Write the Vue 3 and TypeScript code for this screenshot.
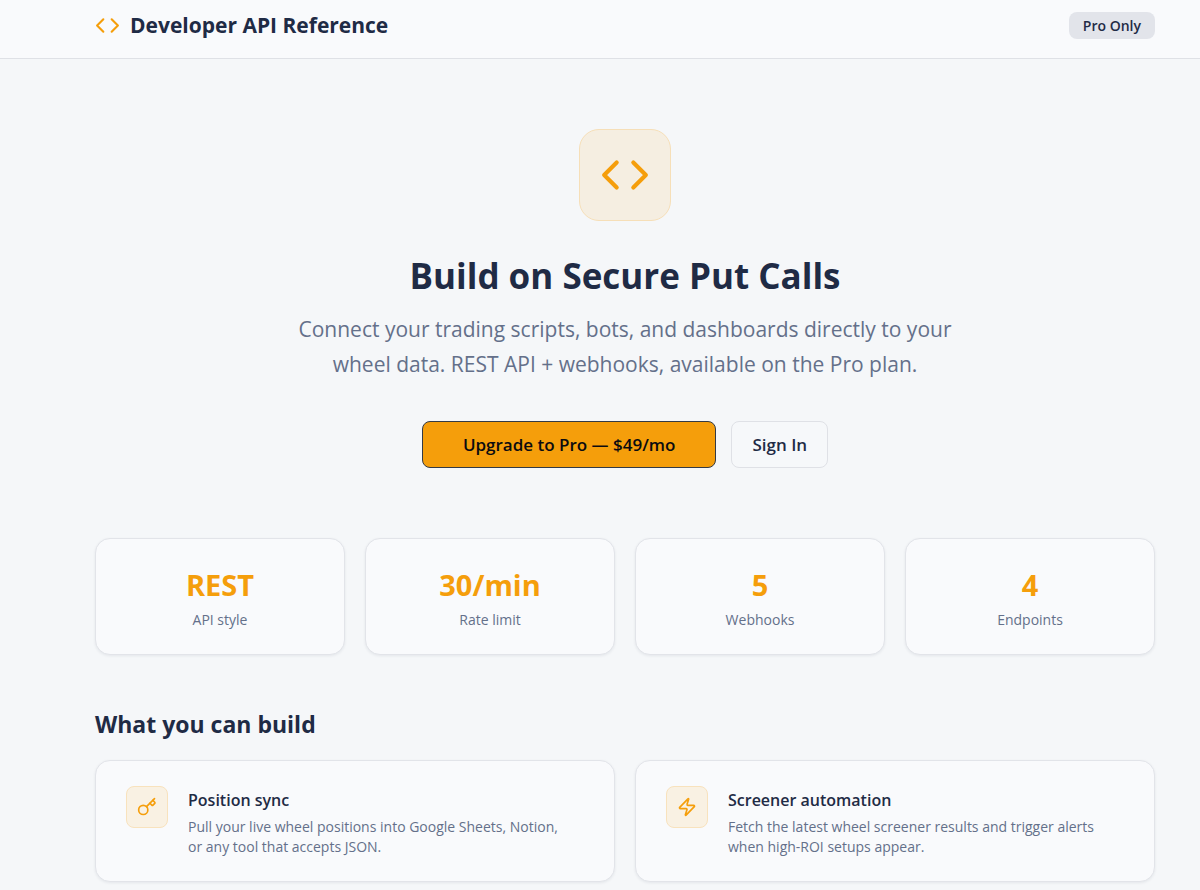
<script setup lang="ts">
interface Stat {
  value: string
  label: string
}

interface Feature {
  icon: 'key' | 'zap'
  title: string
  text: string
}

const stats: Stat[] = [
  { value: 'REST', label: 'API style' },
  { value: '30/min', label: 'Rate limit' },
  { value: '5', label: 'Webhooks' },
  { value: '4', label: 'Endpoints' },
]

const features: Feature[] = [
  {
    icon: 'key',
    title: 'Position sync',
    text: 'Pull your live wheel positions into Google Sheets, Notion, or any tool that accepts JSON.',
  },
  {
    icon: 'zap',
    title: 'Screener automation',
    text: 'Fetch the latest wheel screener results and trigger alerts when high-ROI setups appear.',
  },
]
</script>

<template>
  <div class="page">
    <header class="topbar">
      <div class="brand">
        <svg class="icon brand-icon" viewBox="0 0 24 24" aria-hidden="true">
          <path d="m16 18 6-6-6-6" />
          <path d="m8 6-6 6 6 6" />
        </svg>
        <h1 class="brand-title">Developer API Reference</h1>
      </div>
      <span class="badge">Pro Only</span>
    </header>

    <main class="content">
      <section class="hero">
        <div class="hero-tile">
          <svg class="icon hero-icon" viewBox="0 0 24 24" aria-hidden="true">
            <path d="m16 18 6-6-6-6" />
            <path d="m8 6-6 6 6 6" />
          </svg>
        </div>
        <h2 class="hero-title">Build on Secure Put Calls</h2>
        <p class="hero-text">
          Connect your trading scripts, bots, and dashboards directly to your wheel data. REST API +
          webhooks, available on the Pro plan.
        </p>
        <div class="actions">
          <button type="button" class="btn btn-primary">Upgrade to Pro — $49/mo</button>
          <button type="button" class="btn btn-outline">Sign In</button>
        </div>
      </section>

      <section class="stats">
        <div v-for="stat in stats" :key="stat.label" class="card stat">
          <div class="stat-value">{{ stat.value }}</div>
          <div class="stat-label">{{ stat.label }}</div>
        </div>
      </section>

      <section>
        <h2 class="section-title">What you can build</h2>
        <div class="features">
          <article v-for="feature in features" :key="feature.title" class="card feature">
            <div class="feature-tile">
              <svg class="icon feature-icon" viewBox="0 0 24 24" aria-hidden="true">
                <template v-if="feature.icon === 'key'">
                  <circle cx="7.5" cy="15.5" r="5.5" />
                  <path d="m21 2-9.6 9.6" />
                  <path d="m15.5 7.5 2.3 2.3a1 1 0 0 0 1.4 0l2.1-2.1a1 1 0 0 0 0-1.4L19 4" />
                </template>
                <path
                  v-else
                  d="M4 14a1 1 0 0 1-.78-1.63l9.9-10.2a.5.5 0 0 1 .86.46l-1.92 6.02A1 1 0 0 0 13 10h7a1 1 0 0 1 .78 1.63l-9.9 10.2a.5.5 0 0 1-.86-.46l1.92-6.02A1 1 0 0 0 11 14z"
                />
              </svg>
            </div>
            <div>
              <h3 class="feature-title">{{ feature.title }}</h3>
              <p class="feature-text">{{ feature.text }}</p>
            </div>
          </article>
        </div>
      </section>
    </main>
  </div>
</template>

<style>
body {
  margin: 0;
  background: #f5f7f9;
}
</style>

<style scoped>
.page {
  color: #1f2b45;
  font-family: 'Segoe UI', 'Open Sans', 'Noto Sans', sans-serif;
  font-size: 14px;
  line-height: 20px;
}

h1,
h2,
h3,
p {
  margin: 0;
}

.icon {
  display: block;
  fill: none;
  stroke: #f59e0b;
  stroke-width: 2;
  stroke-linecap: round;
  stroke-linejoin: round;
}

.topbar {
  display: flex;
  align-items: center;
  justify-content: space-between;
  padding: 7px 45px 15px 95px;
  background: #f9fafc;
  border-bottom: 1px solid #dfe1e6;
}

.brand {
  display: flex;
  align-items: center;
  gap: 10px;
}

.brand-icon {
  width: 25px;
  height: 25px;
}

.brand-title {
  font-size: 21px;
  line-height: 36px;
  font-weight: 700;
}

.badge {
  padding: 4px 14px 3px;
  border-radius: 8px;
  background: #e2e4ea;
  font-weight: 600;
}

.content {
  padding: 70px 45px 20px 95px;
}

.hero {
  display: flex;
  flex-direction: column;
  align-items: center;
  text-align: center;
}

.hero-tile {
  padding: 20px;
  border: 1px solid #f6dfb8;
  border-radius: 20px;
  background: #f5eee1;
}

.hero-icon {
  width: 50px;
  height: 50px;
}

.hero-title {
  margin-top: 30px;
  font-size: 35px;
  line-height: 50px;
  font-weight: 700;
}

.hero-text {
  max-width: 700px;
  margin-top: 11px;
  color: #64708a;
  font-size: 21px;
  line-height: 35px;
}

.actions {
  display: flex;
  gap: 15px;
  margin-top: 39px;
}

.btn {
  padding: 11px 20px 10px;
  border: 1px solid #dfe1e6;
  border-radius: 8px;
  font: inherit;
  font-size: 17px;
  line-height: 24px;
  font-weight: 600;
  cursor: pointer;
}

.btn-primary {
  padding-inline: 40px;
  border-color: #333a45;
  background: #f59e0b;
  color: #0b0b10;
}

.btn-outline {
  background: #f6f8fa;
  color: #1f2b45;
}

.card {
  border: 1px solid #e2e4e9;
  border-radius: 15px;
  background: #f9fafc;
  box-shadow: 0 1px 3px rgb(31 43 69 / 8%);
}

.stats {
  display: grid;
  grid-template-columns: repeat(4, 1fr);
  gap: 20px;
  margin-top: 70px;
}

.stat {
  padding: 26px 25px 24px;
  text-align: center;
}

.stat-value {
  color: #f59e0b;
  font-size: 29px;
  line-height: 40px;
  font-weight: 700;
}

.stat-label {
  margin-top: 5px;
  color: #64708a;
}

.section-title {
  margin-top: 51px;
  font-size: 23px;
  line-height: 36px;
  font-weight: 700;
}

.features {
  display: grid;
  grid-template-columns: repeat(2, 1fr);
  gap: 20px;
  margin-top: 18px;
}

.feature {
  display: flex;
  gap: 20px;
  padding: 25px 30px 24px;
}

.feature-tile {
  flex: none;
  align-self: flex-start;
  padding: 10px;
  border: 1px solid #f8e2bd;
  border-radius: 8px;
  background: #f9f1e3;
}

.feature-icon {
  width: 20px;
  height: 20px;
}

.feature-title {
  padding-top: 1px;
  font-size: 16px;
  line-height: 26px;
  font-weight: 600;
}

.feature-text {
  margin-top: 4px;
  padding-right: 12px;
  color: #64708a;
}
</style>
